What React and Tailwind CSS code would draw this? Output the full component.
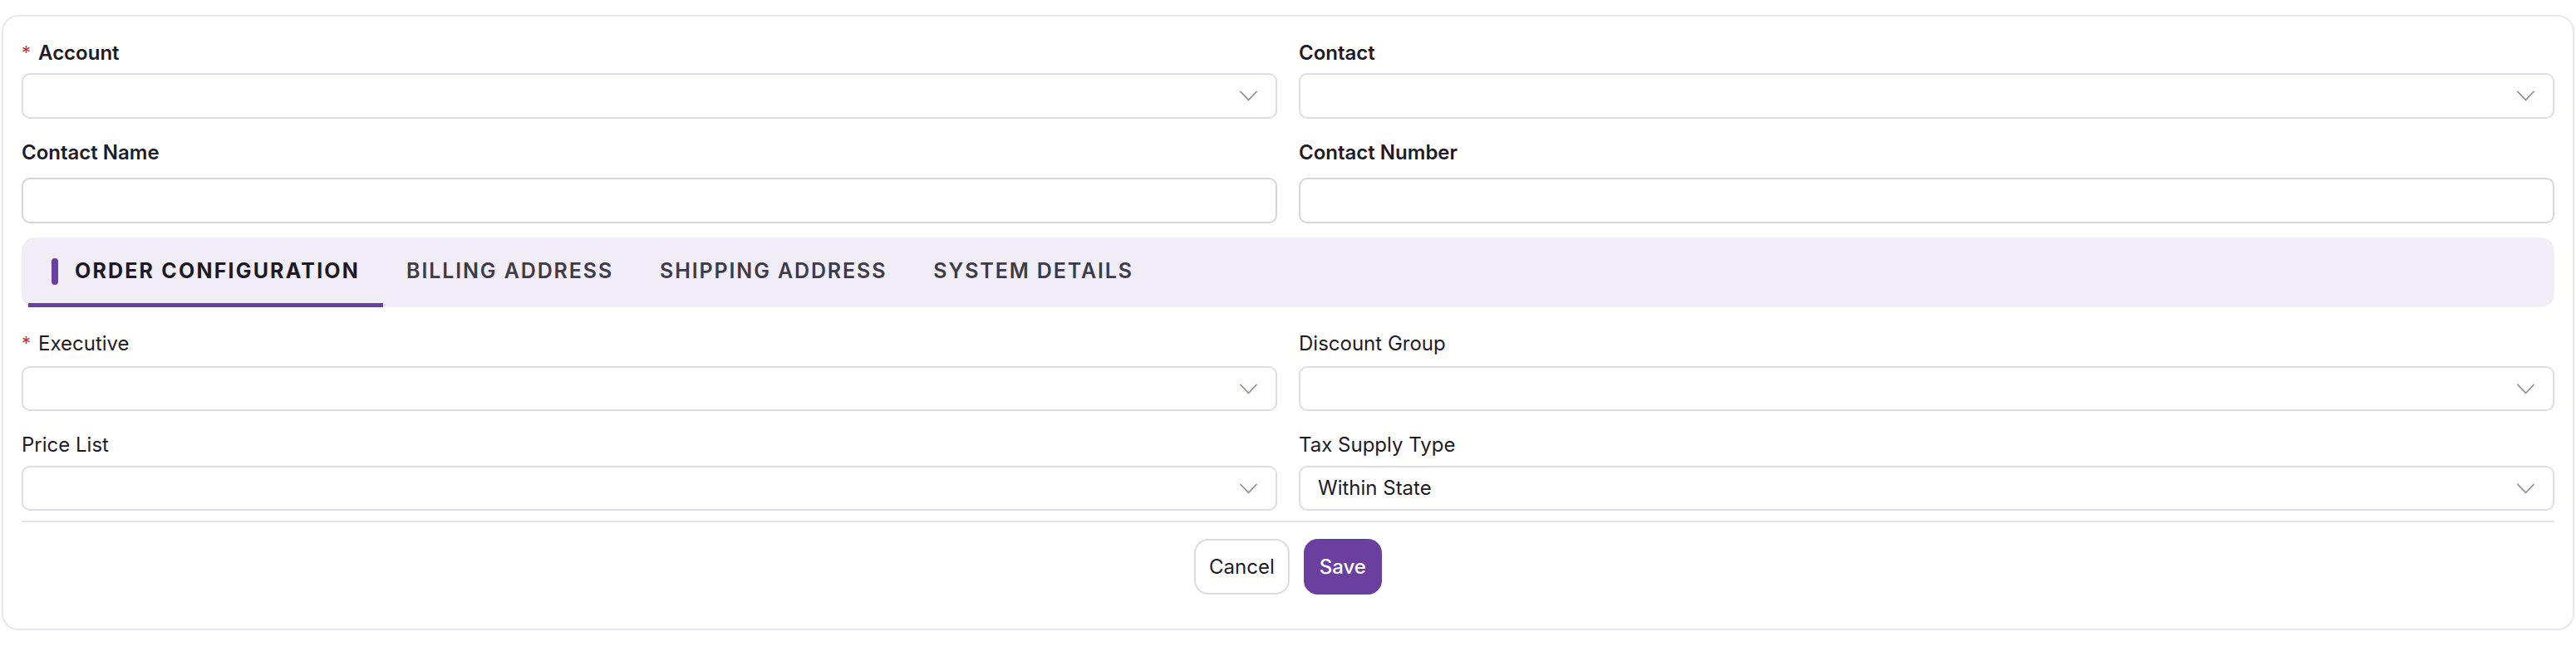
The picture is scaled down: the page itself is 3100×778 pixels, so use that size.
import { useState } from "react";

const tabs = ["Order Configuration", "Billing Address", "Shipping Address", "System Details"];

function Chevron() {
  return (
    <svg width="21" height="13" viewBox="0 0 21 13" fill="none" className="shrink-0">
      <path d="M1 1.5 L10.5 11.5 L20 1.5" stroke="#908c9c" strokeWidth="1.8" strokeLinecap="round" strokeLinejoin="round" />
    </svg>
  );
}

function Label({ text, required, bold }) {
  return (
    <label className={`flex items-center h-8 leading-8 text-[24px] text-[#1e1b26] ${bold ? "font-semibold" : "font-normal"}`}>
      {required && <span className="text-[#c2343b] text-[22px] font-normal mr-[9px] self-start leading-[30px]">*</span>}
      {text}
    </label>
  );
}

function SelectBox({ value, height }) {
  return (
    <div
      className={`flex items-center justify-between w-full ${height} border-2 border-[#dfdce8] rounded-[10px] bg-white pl-[21px] pr-[22px] text-[24px] text-[#1e1b26]`}
    >
      <span>{value}</span>
      <Chevron />
    </div>
  );
}

function TextBox({ name }) {
  return (
    <input
      type="text"
      name={name}
      className="w-full h-[55px] border-2 border-[#d6d6d9] rounded-[10px] bg-white px-[21px] text-[24px] outline-none"
    />
  );
}

export default function App() {
  const [activeTab, setActiveTab] = useState(0);

  return (
    <div className="bg-white pt-[18px] px-[2px] pb-[19px] font-['Inter','Liberation_Sans',sans-serif]">
      <div className="border-2 border-[#e8e6ee] rounded-[20px] px-[22px] pt-[28px] pb-[41px]">
        {/* header fields */}
        <div className="grid grid-cols-2 gap-x-[26px]">
          <div>
            <Label text="Account" required bold />
            <div className="mt-[8px]">
              <SelectBox height="h-[55px]" />
            </div>
          </div>
          <div>
            <Label text="Contact" bold />
            <div className="mt-[8px]">
              <SelectBox height="h-[55px]" />
            </div>
          </div>
        </div>
        <div className="grid grid-cols-2 gap-x-[26px] mt-[25px]">
          <div>
            <Label text="Contact Name" bold />
            <div className="mt-[14px]">
              <TextBox name="contactName" />
            </div>
          </div>
          <div>
            <Label text="Contact Number" bold />
            <div className="mt-[14px]">
              <TextBox name="contactNumber" />
            </div>
          </div>
        </div>

        {/* tabs */}
        <div className="mt-[17px] flex h-[84px] bg-[#f0edf7] rounded-[16px] pl-[8px]">
          {tabs.map((tab, i) => {
            const active = i === activeTab;
            return (
              <button
                key={tab}
                type="button"
                onClick={() => setActiveTab(i)}
                className={`flex items-center px-[28px] pt-[2px] border-b-[5px] uppercase text-[25px] ${
                  active
                    ? "border-[#6b3fa0] font-bold tracking-[0.087em] text-[#1c1924]"
                    : "border-transparent font-semibold tracking-[0.075em] text-[#3e3a48]"
                }`}
              >
                {active && <span className="w-[8px] h-[32px] rounded-full bg-[#6b3fa0] mr-[20px]" />}
                {tab}
              </button>
            );
          })}
        </div>

        {/* order configuration */}
        <div className="grid grid-cols-2 gap-x-[26px] mt-[28px]">
          <div>
            <Label text="Executive" required />
            <div className="mt-[11px]">
              <SelectBox height="h-[54px]" />
            </div>
          </div>
          <div>
            <Label text="Discount Group" />
            <div className="mt-[11px]">
              <SelectBox height="h-[54px]" />
            </div>
          </div>
        </div>
        <div className="grid grid-cols-2 gap-x-[26px] mt-[25px]">
          <div>
            <Label text="Price List" />
            <div className="mt-[9px]">
              <SelectBox height="h-[54px]" />
            </div>
          </div>
          <div>
            <Label text="Tax Supply Type" />
            <div className="mt-[9px]">
              <SelectBox height="h-[54px]" value="Within State" />
            </div>
          </div>
        </div>

        <div className="mt-[12px] h-[2px] bg-[#e4e2ea]" />

        <div className="mt-[20px] flex justify-center gap-[17px]">
          <button
            type="button"
            className="h-[67px] px-[16px] border-2 border-[#dcdae4] rounded-[17px] bg-white text-[24px] text-[#1e1b26]"
          >
            Cancel
          </button>
          <button
            type="submit"
            className="h-[67px] px-[17px] border-2 border-[#6b3fa0] rounded-[17px] bg-[#6b3fa0] text-[24px] font-medium text-white"
          >
            Save
          </button>
        </div>
      </div>
    </div>
  );
}
